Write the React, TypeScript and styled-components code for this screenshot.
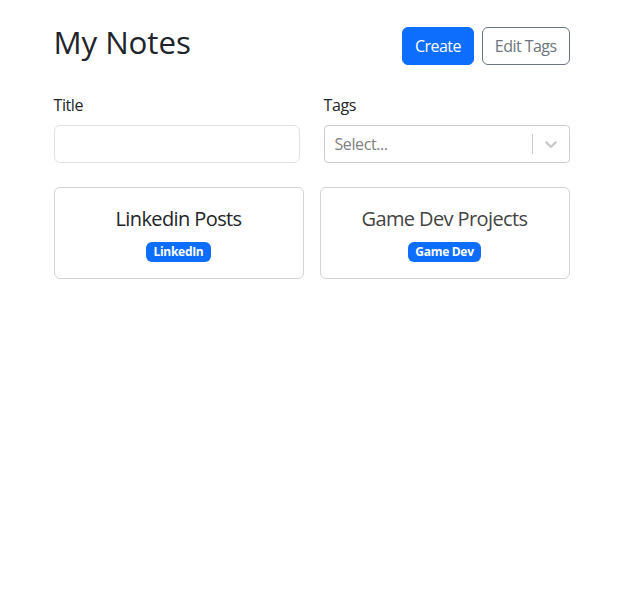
import React from "react";
import styled, { createGlobalStyle } from "styled-components";

const Global = createGlobalStyle`
  *, *::before, *::after { box-sizing: border-box; }
  body {
    margin: 0;
    font-family: "Open Sans", "Noto Sans", sans-serif;
    font-size: 16px;
    line-height: 1.5;
    color: #212529;
    background: #fff;
  }
`;

const Container = styled.div`
  width: 540px;
  margin: 24px auto;
  padding: 0 12px;
`;

const Header = styled.div`
  display: flex;
  align-items: center;
  justify-content: space-between;
  margin-bottom: 24px;
`;

const Heading = styled.h1`
  margin: 0 0 8px;
  font-size: 31.3px;
  font-weight: 500;
  line-height: 36.6px;
  letter-spacing: -0.1px;
`;

const ButtonStack = styled.div`
  display: flex;
  gap: 8px;
`;

const Button = styled.button<{ $variant: "primary" | "outline" }>`
  height: 38px;
  padding: 0 12px;
  font-family: inherit;
  font-size: 16px;
  line-height: 1.5;
  letter-spacing: -0.55px;
  border-radius: 6px;
  cursor: pointer;
  border: 1px solid ${(p) => (p.$variant === "primary" ? "#0d6efd" : "#6c757d")};
  background: ${(p) => (p.$variant === "primary" ? "#0d6efd" : "#fff")};
  color: ${(p) => (p.$variant === "primary" ? "#fff" : "#6c757d")};
`;

const FormRow = styled.div`
  display: grid;
  grid-template-columns: 1fr 1fr;
  column-gap: 24px;
  margin-bottom: 24px;
`;

const Field = styled.div`
  display: flex;
  flex-direction: column;
`;

const Label = styled.label`
  margin-bottom: 8px;
  font-size: 16px;
  letter-spacing: -0.4px;
`;

const TextInput = styled.input`
  height: 38px;
  border: 1px solid #dee2e6;
  border-radius: 6px;
  padding: 6px 12px;
  font-family: inherit;
  font-size: 16px;
  outline: none;
`;

const SelectBox = styled.div`
  height: 38px;
  border: 1px solid #cccccc;
  border-radius: 4px;
  display: flex;
  align-items: center;
`;

const Placeholder = styled.div`
  flex: 1;
  padding: 2px 10px;
  color: #808080;
  font-size: 16px;
  letter-spacing: -0.4px;
`;

const Separator = styled.span`
  width: 1px;
  align-self: stretch;
  margin: 8px 0;
  background: #cccccc;
`;

const Indicator = styled.div`
  padding: 8px;
  display: flex;
  color: #cccccc;
`;

const CardGrid = styled.div`
  display: grid;
  grid-template-columns: 1fr 1fr;
  gap: 16px;
`;

const Card = styled.a`
  display: flex;
  flex-direction: column;
  align-items: center;
  justify-content: center;
  gap: 8px;
  padding: 16px;
  border: 1px solid #d3d3d3;
  border-radius: 6px;
  color: inherit;
  text-decoration: none;
`;

const CardTitle = styled.span<{ $muted?: boolean }>`
  font-size: 20px;
  line-height: 1.5;
  letter-spacing: -0.6px;
  color: ${(p) => (p.$muted ? "#444" : "#212529")};
`;

const Badges = styled.div`
  display: flex;
  gap: 4px;
`;

const Badge = styled.span`
  display: inline-block;
  padding: 4.2px 7.8px;
  font-size: 12px;
  font-weight: 700;
  line-height: 1;
  letter-spacing: -0.3px;
  color: #fff;
  background: #0d6efd;
  border-radius: 6px;
`;

const Chevron = () => (
  <svg width="20" height="20" viewBox="0 0 20 20" fill="currentColor" aria-hidden="true">
    <path d="M4.516 7.548c0.436-0.446 1.043-0.481 1.576 0l3.908 3.747 3.908-3.747c0.533-0.481 1.141-0.446 1.574 0 0.436 0.445 0.408 1.197 0 1.615-0.406 0.418-4.695 4.502-4.695 4.502-0.217 0.223-0.502 0.335-0.787 0.335s-0.57-0.112-0.789-0.335c0 0-4.287-4.084-4.695-4.502s-0.436-1.170 0-1.615z" />
  </svg>
);

const notes = [
  { title: "Linkedin Posts", tags: ["LinkedIn"] },
  { title: "Game Dev Projects", tags: ["Game Dev"], muted: true },
];

export default function App() {
  return (
    <>
      <Global />
      <Container>
        <Header>
          <Heading>My Notes</Heading>
          <ButtonStack>
            <Button $variant="primary">Create</Button>
            <Button $variant="outline">Edit Tags</Button>
          </ButtonStack>
        </Header>
        <FormRow>
          <Field>
            <Label>Title</Label>
            <TextInput type="text" />
          </Field>
          <Field>
            <Label>Tags</Label>
            <SelectBox>
              <Placeholder>Select...</Placeholder>
              <Separator />
              <Indicator>
                <Chevron />
              </Indicator>
            </SelectBox>
          </Field>
        </FormRow>
        <CardGrid>
          {notes.map((n) => (
            <Card key={n.title} href="#">
              <CardTitle $muted={n.muted}>{n.title}</CardTitle>
              <Badges>
                {n.tags.map((t) => (
                  <Badge key={t}>{t}</Badge>
                ))}
              </Badges>
            </Card>
          ))}
        </CardGrid>
      </Container>
    </>
  );
}
